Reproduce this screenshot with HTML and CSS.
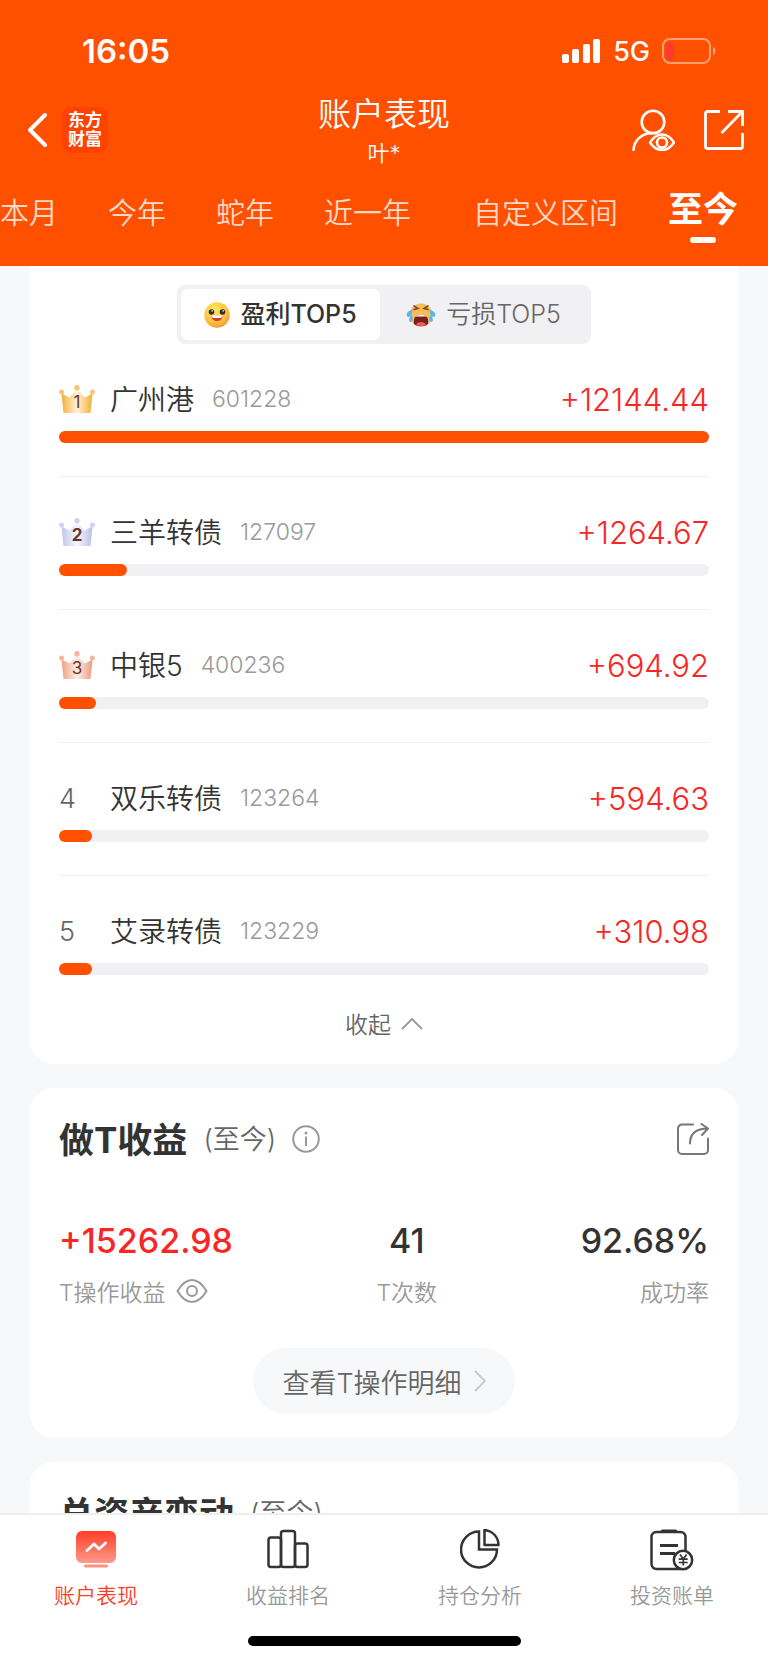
FILE: index.html
```
<!DOCTYPE html>
<html lang="zh-CN">
<head>
  <meta charset="UTF-8">
  <meta name="viewport" content="width=device-width, initial-scale=1.0">
  <title>账户表现</title>
  <link rel="stylesheet" href="styles.css">
</head>
<body>

  <header>
    <div class="status-bar">
      <span class="time">16:05</span>
      <div class="status-icons">
        <svg width="39" height="24" viewBox="0 0 39 24" fill="#fff">
          <rect x="0" y="15" width="7" height="9" rx="2"/>
          <rect x="10" y="10" width="7" height="14" rx="2"/>
          <rect x="21" y="5" width="7" height="19" rx="2"/>
          <rect x="31" y="0" width="7" height="24" rx="2"/>
        </svg>
        <span class="network">5G</span>
        <svg width="54" height="26" viewBox="0 0 54 26">
          <rect x="1" y="1" width="47" height="24" rx="7" fill="none" stroke="#fff" stroke-opacity=".45" stroke-width="2"/>
          <path d="M51 9c3 1 3 7 0 8z" fill="#fff" fill-opacity=".5"/>
          <rect x="4" y="4" width="8" height="18" rx="4" fill="#ff3b30"/>
        </svg>
      </div>
    </div>

    <div class="nav-bar">
      <div class="nav-side">
        <button class="icon-btn" aria-label="返回">
          <svg width="24" height="34" viewBox="-4 0 24 34" fill="none" stroke="#fff" stroke-width="4" stroke-linecap="round" stroke-linejoin="round"><path d="M17 2L2 17l15 15"/></svg>
        </button>
        <div class="logo"><span>东方</span><span>财富</span></div>
      </div>
      <div class="nav-title">
        <h1>账户表现</h1>
        <p>叶*</p>
      </div>
      <div class="nav-side nav-right">
        <button class="icon-btn" aria-label="账户可见">
          <svg width="44" height="42" viewBox="0 0 44 42" fill="none" stroke="#fff" stroke-width="2.6" stroke-linecap="round">
            <circle cx="22" cy="13" r="11.3"/>
            <path d="M2.5 41C3 32 10 24 22 24"/>
            <path d="M19 33.500Q24 25.500 31 25.500T43 33.500Q38 41 31 41T19 33.500z" fill="#ff5000" stroke-linejoin="round" stroke-width="2.400"/>
            <circle cx="31" cy="33.500" r="5"/>
          </svg>
        </button>
        <button class="icon-btn" aria-label="分享">
          <svg width="40" height="40" viewBox="0 0 40 40" fill="none" stroke="#fff" stroke-width="2.800">
            <path d="M16 1.500H3.500a2 2 0 0 0-2 2v33a2 2 0 0 0 2 2h33a2 2 0 0 0 2-2V23"/>
            <path d="M24 1.500h14.500V16M38 2L17.500 23"/>
          </svg>
        </button>
      </div>
    </div>

    <nav class="range-tabs">
      <a href="#">本月</a>
      <a href="#">今年</a>
      <a href="#">蛇年</a>
      <a href="#">近一年</a>
      <a href="#" class="custom">自定义区间</a>
      <a href="#" class="active">至今</a>
    </nav>
  </header>

  <main>
    <section class="card card-top">
      <div class="segment">
        <button class="selected">
          <svg width="26" height="26" viewBox="1 0 26 26">
            <defs><radialGradient id="smile" cx=".4" cy=".3" r=".8"><stop offset="0" stop-color="#ffe95c"/><stop offset=".6" stop-color="#ffc23c"/><stop offset="1" stop-color="#f58a3c"/></radialGradient></defs>
            <circle cx="14" cy="13" r="12.700" fill="url(#smile)"/>
            <circle cx="8.500" cy="10" r="2.800" fill="#3a2a2c"/><circle cx="19.500" cy="10" r="2.800" fill="#3a2a2c"/>
            <circle cx="9.200" cy="9" r=".8" fill="#fff"/><circle cx="20.200" cy="9" r=".8" fill="#fff"/>
            <path d="M8.500 14h11c0 3-2.500 5-5.500 5s-5.500-2-5.500-5z" fill="#d83a35"/>
            <path d="M8.500 13.500h11c0 1.500-1 2.500-2 2.500h-7c-1 0-2-1-2-2.500z" fill="#fff"/>
          </svg>
          盈利TOP5
        </button>
        <button>
          <svg width="30" height="26" viewBox="0 0 30 26">
            <circle cx="15" cy="13" r="11.500" fill="#f8bd55"/>
            <path d="M8 4l4 2.500-4 1M22 4l-4 2.500 4 1" fill="none" stroke="#7b432b" stroke-width="1.500" stroke-linecap="round"/>
            <path d="M8 22c-1-7 2-9 7-9s8 2 7 9c-3 3-11 3-14 0z" fill="#7a1f20"/>
            <path d="M9.500 14.500c2-2 9-2 11 0z" fill="#fff"/>
            <path d="M10 23c1-4 9-4 10 0-3 1.500-7 1.500-10 0z" fill="#ed5b5b"/>
            <path d="M6.500 8C1 9 0 12 1 14s5 1 5.500-6zM5.500 13c-3 3-3 7-1 7s3-3 1-7zM23.500 8c5.500 1 6.500 4 5.500 6s-5 1-5.500-6zM24.500 13c3 3 3 7 1 7s-3-3-1-7z" fill="#58b5f5"/>
          </svg>
          亏损TOP5
        </button>
      </div>

      <svg width="0" height="0" class="defs">
        <defs>
          <linearGradient id="gold"><stop offset="0" stop-color="#f6ad35"/><stop offset=".5" stop-color="#fff3d8"/><stop offset="1" stop-color="#f6ad35"/></linearGradient>
          <linearGradient id="silver"><stop offset="0" stop-color="#bcc6ea"/><stop offset=".5" stop-color="#f5f6fd"/><stop offset="1" stop-color="#b9bfe9"/></linearGradient>
          <linearGradient id="bronze"><stop offset="0" stop-color="#ee9f84"/><stop offset=".5" stop-color="#fdeee7"/><stop offset="1" stop-color="#ec9a7e"/></linearGradient>
          <g id="crown">
            <path d="M4.500 28L2.500 8.500l8 4L18 4l7.500 8.500 8-4-2 19.500z"/>
            <g fill="currentColor"><circle cx="18" cy="2.800" r="2.700"/><circle cx="2.600" cy="7" r="2.500"/><circle cx="33.400" cy="7" r="2.500"/></g>
          </g>
        </defs>
      </svg>

      <ul class="rank-list">
        <li>
          <div class="rank-row">
            <span class="rank gold"><svg width="36" height="28" viewBox="0 0 36 28"><use href="#crown" fill="url(#gold)"/><text x="18" y="23">1</text></svg></span>
            <span class="name">广州港</span><span class="code">601228</span><span class="amount">+12144.44</span>
          </div>
          <div class="bar"><div style="width: 100%"></div></div>
        </li>
        <li>
          <div class="rank-row">
            <span class="rank silver"><svg width="36" height="28" viewBox="0 0 36 28"><use href="#crown" fill="url(#silver)"/><text x="18" y="23" class="strong">2</text></svg></span>
            <span class="name">三羊转债</span><span class="code">127097</span><span class="amount">+1264.67</span>
          </div>
          <div class="bar"><div style="width: 10.4%"></div></div>
        </li>
        <li>
          <div class="rank-row">
            <span class="rank bronze"><svg width="36" height="28" viewBox="0 0 36 28"><use href="#crown" fill="url(#bronze)"/><text x="18" y="23">3</text></svg></span>
            <span class="name">中银5</span><span class="code">400236</span><span class="amount">+694.92</span>
          </div>
          <div class="bar"><div style="width: 5.7%"></div></div>
        </li>
        <li>
          <div class="rank-row">
            <span class="rank">4</span>
            <span class="name">双乐转债</span><span class="code">123264</span><span class="amount">+594.63</span>
          </div>
          <div class="bar"><div style="width: 5%"></div></div>
        </li>
        <li>
          <div class="rank-row">
            <span class="rank">5</span>
            <span class="name">艾录转债</span><span class="code">123229</span><span class="amount">+310.98</span>
          </div>
          <div class="bar"><div style="width: 5%"></div></div>
        </li>
      </ul>

      <button class="collapse">
        收起
        <svg width="22" height="13" viewBox="0 0 22 13" fill="none" stroke="#999" stroke-width="1.800"><path d="M1 12L11 2l10 10"/></svg>
      </button>
    </section>

    <section class="card">
      <div class="card-head">
        <h2>做T收益</h2>
        <span class="range">(至今)</span>
        <button class="icon-btn" aria-label="说明">
          <svg width="28" height="28" viewBox="0 0 28 28" fill="none" stroke="#999" stroke-width="2"><circle cx="14" cy="14" r="12.800"/><path d="M14 11.500V21"/><circle cx="14" cy="8" r="1.500" fill="#999" stroke="none"/></svg>
        </button>
        <button class="icon-btn share" aria-label="分享">
          <svg width="32" height="32" viewBox="0 0 32 32" fill="none" stroke="#777" stroke-width="2" stroke-linecap="round" stroke-linejoin="round">
            <path d="M16 1.500H5a4 4 0 0 0-4 4V27a4 4 0 0 0 4 4h22a4 4 0 0 0 4-4V15.500"/>
            <path d="M13 20.500C13 11 18 5.500 31 5.500M24.500 1L31 5.500 25 12"/>
          </svg>
        </button>
      </div>

      <div class="stats">
        <div>
          <strong class="profit">+15262.98</strong>
          <p>T操作收益
            <svg width="32" height="24" viewBox="0 0 32 24" fill="none" stroke="#999" stroke-width="2"><path d="M1.500 12Q8 1 16 1t14.500 11Q24 23 16 23T1.500 12z" stroke-linejoin="round"/><circle cx="16" cy="12" r="5"/></svg>
          </p>
        </div>
        <div class="center">
          <strong>41</strong>
          <p>T次数</p>
        </div>
        <div class="right">
          <strong>92.68%</strong>
          <p>成功率</p>
        </div>
      </div>

      <button class="detail-btn">
        查看T操作明细
        <svg width="12" height="22" viewBox="0 0 12 22" fill="none" stroke="#c8c8c8" stroke-width="1.800"><path d="M1 1l10 10L1 21"/></svg>
      </button>
    </section>

    <section class="card">
      <div class="card-head">
        <h2>总资产变动</h2>
        <span class="range">(至今)</span>
      </div>
    </section>
  </main>

  <footer>
    <nav class="tab-bar">
      <a href="#" class="active">
        <svg width="40" height="40" viewBox="0 0 40 40">
          <defs><linearGradient id="red" x2="0" y2="1"><stop offset="0" stop-color="#ff3d26"/><stop offset="1" stop-color="#ff9a8c"/></linearGradient></defs>
          <rect x="0" y="2" width="40" height="32" rx="6" fill="url(#red)"/>
          <rect x="8" y="35.500" width="24" height="3" rx="1.500" fill="#ff8f80"/>
          <path d="M11 21.500l7-6.500 5 5 6.500-6" fill="none" stroke="#fff" stroke-width="2.800" stroke-linecap="round" stroke-linejoin="round"/>
        </svg>
        账户表现
      </a>
      <a href="#">
        <svg width="42" height="40" viewBox="0 0 42 40" fill="none" stroke="#333" stroke-width="2.500">
          <rect x="1.500" y="8.500" width="12.500" height="29.500" rx="2.500"/>
          <rect x="14" y="2" width="14" height="36" rx="2.500"/>
          <rect x="28" y="14.500" width="12.500" height="23.500" rx="2.500"/>
        </svg>
        收益排名
      </a>
      <a href="#">
        <svg width="40" height="40" viewBox="0 0 40 40" fill="none" stroke="#333" stroke-width="2.500">
          <path d="M19 2.500A18 18 0 1 0 37 20.500H19z"/>
          <path d="M24.500 1v15h14A15 15 0 0 0 24.500 1z" stroke-linejoin="round"/>
        </svg>
        持仓分析
      </a>
      <a href="#">
        <svg width="44" height="42" viewBox="0 0 44 42" fill="none" stroke="#333" stroke-width="2.500">
          <rect x="1.500" y="3" width="34" height="37" rx="5"/>
          <path d="M12.500 2.300h13" stroke-width="3.500" stroke-linecap="round"/>
          <path d="M10 16.500h18M10 24.500h15" stroke-width="2.800"/>
          <circle cx="33" cy="31" r="9.200" fill="#fff"/>
          <path d="M30 25.500l3.300 4.500 3.300-4.500M33.300 30v6.500M28.700 30.200h9M28.700 33.500h9" stroke-width="1.700"/>
        </svg>
        投资账单
      </a>
    </nav>
    <div class="home-indicator"></div>
  </footer>

</body>
</html>
```
FILE: styles.css
```
:root {
  --orange: #ff5000;
  --red: #f92626;
  --text: #333;
  --text-mid: #666;
  --text-light: #999;
  --page: #f7f8fa;
  --track: #f1f1f3;
}

* {
  margin: 0;
  padding: 0;
  box-sizing: border-box;
}

body {
  display: flex;
  flex-direction: column;
  height: 100vh;
  font-family: Inter, "Noto Sans CJK SC", sans-serif;
  font-weight: 350;
  color: var(--text);
  background: var(--page);
}

button {
  border: none;
  background: none;
  font: inherit;
  color: inherit;
  cursor: pointer;
}

a {
  color: inherit;
  text-decoration: none;
}

svg {
  display: block;
  flex: none;
}

/* header */

header {
  flex: none;
  background: var(--orange);
  color: #fff;
}

.status-bar {
  display: flex;
  justify-content: space-between;
  align-items: center;
  height: 90px;
  padding: 12px 52px 0 82px;
}

.time {
  font-size: 33px;
  font-weight: 600;
}

.status-icons {
  display: flex;
  align-items: center;
  gap: 12px;
}

.network {
  font-size: 27px;
  font-weight: 500;
}

.nav-bar {
  display: flex;
  align-items: center;
  height: 80px;
  padding: 0 24px;
}

.nav-side {
  display: flex;
  flex: 1;
  align-items: center;
  gap: 14px;
}

.nav-right {
  justify-content: flex-end;
  gap: 29px;
}

.logo {
  display: flex;
  flex-direction: column;
  justify-content: center;
  width: 46px;
  height: 46px;
  border-radius: 9px;
  background: #ff4200;
  font-size: 17px;
  font-weight: 700;
  line-height: 19px;
  text-align: center;
}

.nav-title {
  text-align: center;
}

.nav-title h1 {
  font-size: 33px;
  font-weight: 350;
  line-height: 40px;
}

.nav-title p {
  margin-top: 5px;
  font-size: 22px;
  line-height: 28px;
}

.range-tabs {
  display: flex;
  justify-content: flex-end;
  align-items: flex-start;
  gap: 50px;
  height: 96px;
  padding: 20px 30px 0 0;
  overflow: hidden;
  font-size: 29px;
  line-height: 48px;
  white-space: nowrap;
  color: #ffd9c7;
}

.range-tabs .custom {
  margin-left: 12px;
}

.range-tabs .active {
  position: relative;
  font-size: 35px;
  font-weight: 700;
  line-height: 38px;
  color: #fff;
}

.range-tabs .active::after {
  content: "";
  position: absolute;
  left: 50%;
  bottom: -15px;
  width: 26px;
  height: 6px;
  margin-left: -13px;
  border-radius: 3px;
  background: #fff;
}

/* cards */

main {
  display: flex;
  flex: 1;
  flex-direction: column;
  gap: 24px;
  min-height: 0;
  padding: 0 30px;
  overflow: hidden;
}

.card {
  flex: none;
  padding: 30px 29px 24px;
  border-radius: 24px;
  background: #fff;
}

.card-top {
  padding: 19px 29px 20px;
  border-radius: 0 0 24px 24px;
}

.segment {
  display: grid;
  grid-template-columns: 199px 1fr;
  width: 414px;
  margin: 0 auto;
  padding: 4px;
  border-radius: 8px;
  background: var(--track);
}

.segment button {
  display: flex;
  justify-content: center;
  align-items: center;
  gap: 10px;
  height: 51px;
  border-radius: 7px;
  font-size: 25px;
  line-height: 49px;
  color: var(--text-mid);
}

.segment .selected {
  background: #fff;
  font-weight: 500;
  color: var(--text);
}

.defs {
  position: absolute;
}

.rank-list {
  list-style: none;
}

.rank-list li {
  padding: 35px 0 33px;
  border-bottom: 1px solid #f0f0f2;
}

.rank-list li:last-child {
  padding-bottom: 0;
  border-bottom: none;
}

.rank-row {
  display: flex;
  align-items: center;
  height: 40px;
}

.rank {
  width: 51px;
  font-size: 27px;
  color: var(--text-mid);
}

.gold {
  color: #f8c474;
}

.silver {
  color: #cdd3f0;
}

.bronze {
  color: #f2b5a0;
}

.rank text {
  font-size: 17px;
  font-weight: 400;
  text-anchor: middle;
  fill: #6b3226;
}

.rank .strong {
  font-weight: 700;
}

.name {
  padding-bottom: 2px;
  font-size: 28px;
}

.code {
  margin-left: 18px;
  font-size: 23px;
  font-weight: 300;
  color: var(--text-light);
}

.amount {
  margin-left: auto;
  font-size: 31px;
  color: var(--red);
}

.bar {
  height: 12px;
  margin-top: 12px;
  border-radius: 6px;
  background: var(--track);
}

.bar div {
  height: 100%;
  border-radius: 6px;
  background: var(--orange);
}

.collapse {
  display: flex;
  align-items: center;
  gap: 10px;
  height: 38px;
  margin: 29px auto 2px;
  font-size: 23px;
  color: var(--text-mid);
}

.card-head {
  display: flex;
  align-items: center;
  height: 42px;
}

.card-head h2 {
  padding-bottom: 4px;
  font-size: 35px;
  font-weight: 700;
}

.range {
  margin: 0 16px;
  padding-bottom: 4px;
  font-size: 27px;
  color: var(--text-mid);
}

.share {
  margin-left: auto;
}

.stats {
  display: flex;
  justify-content: space-between;
  margin-top: 60px;
}

.stats strong {
  display: block;
  font-size: 34px;
  font-weight: 500;
  line-height: 42px;
}

.stats .profit {
  color: var(--red);
}

.stats p {
  display: flex;
  align-items: center;
  gap: 10px;
  height: 32px;
  margin-top: 13px;
  font-size: 23px;
  color: var(--text-light);
}

.stats .center p {
  justify-content: center;
}

.stats .center {
  text-align: center;
}

.stats .right p {
  justify-content: flex-end;
}

.detail-btn {
  display: flex;
  align-items: center;
  gap: 12px;
  height: 66px;
  margin: 41px auto 0;
  padding: 0 29px;
  border-radius: 33px;
  background: var(--page);
  font-size: 27px;
  color: var(--text-mid);
}

/* bottom tabs */

footer {
  flex: none;
  height: 150px;
  border-top: 2px solid #eee;
  background: #fff;
}

.tab-bar {
  display: flex;
}

.tab-bar a {
  display: flex;
  flex: 1;
  flex-direction: column;
  align-items: center;
  justify-content: space-between;
  height: 95px;
  padding-top: 14px;
  font-size: 21px;
  line-height: 28px;
  color: var(--text-light);
}

.tab-bar .active {
  color: #ff3d26;
}

.home-indicator {
  width: 273px;
  height: 10px;
  margin: 26px auto 0;
  border-radius: 5px;
  background: #000;
}
```
